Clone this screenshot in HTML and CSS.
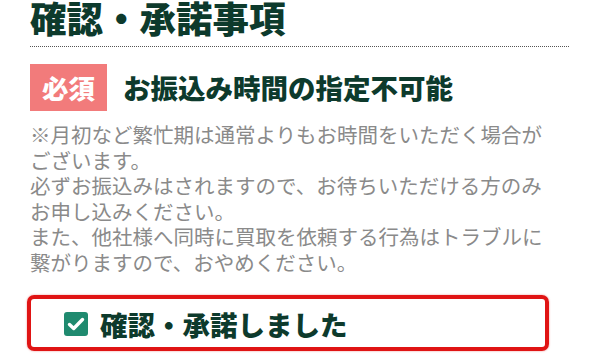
FILE: index.html
```html
<!DOCTYPE html>
<html lang="ja">
<head>
<meta charset="utf-8">
<title>確認・承諾事項</title>
<link rel="stylesheet" href="styles.css">
</head>
<body>
<main class="page">
  <h1 class="title">確認・承諾事項</h1>
  <div class="item-head">
    <span class="badge">必須</span>
    <h2 class="item-title">お振込み時間の指定不可能</h2>
  </div>
  <p class="note">※月初など繁忙期は通常よりもお時間をいただく場合がございます。<br>必ずお振込みはされますので、お待ちいただける方のみお申し込みください。<br>また、他社様へ同時に買取を依頼する行為はトラブルに繋がりますので、おやめください。</p>
  <label class="agree">
    <span class="check">
      <svg viewBox="0 0 24 24" width="24" height="24"><path d="M5.5 12.5l4.2 4 8.8-9" fill="none" stroke="#fff" stroke-width="3.4" stroke-linecap="round" stroke-linejoin="round"/></svg>
    </span>
    <span class="agree-text">確認・承諾しました</span>
  </label>
</main>
</body>
</html>
```

FILE: styles.css
```css
html, body {
  margin: 0;
  padding: 0;
  background: #ffffff;
}
body {
  font-family: "Noto Sans CJK JP", "Noto Sans", sans-serif;
  width: 599px;
  height: 355px;
  overflow: hidden;
}
.page {
  padding: 0 30px;
}
.title {
  margin: 0;
  font-size: 36.5px;
  line-height: 36px;
  font-weight: 900;
  color: #0d3a2c;
  padding-bottom: 10px;
  border-bottom: 1px dotted #555;
}
.item-head {
  display: flex;
  align-items: center;
  gap: 16px;
  margin-top: 17px;
}
.badge {
  display: block;
  background: #f27b7b;
  color: #fff;
  font-size: 26.5px;
  font-weight: 900;
  line-height: 47px;
  height: 47px;
  padding: 0 12px;
}
.item-title {
  margin: 0;
  font-size: 27.5px;
  font-weight: 900;
  color: #0d3a2c;
  line-height: 47px;
}
.note {
  margin: 11px 0 0;
  width: 528px;
  font-size: 20.5px;
  line-height: 25.5px;
  color: #8a8a8a;
}
.agree {
  display: flex;
  align-items: center;
  gap: 12px;
  box-sizing: border-box;
  width: 522px;
  height: 56px;
  margin: 20px 0 0 -3px;
  padding: 1px 0 0 33px;
  border: 4px solid #e01414;
  border-radius: 7px;
  box-shadow: 0 0 2px rgba(224, 20, 20, 0.5);
}
.check {
  display: flex;
  align-items: center;
  justify-content: center;
  width: 24px;
  height: 24px;
  background: #1f8a6f;
  border-radius: 3px;
}
.agree-text {
  font-size: 27.5px;
  font-weight: 900;
  color: #0d3a2c;
  line-height: 34px;
}
```
